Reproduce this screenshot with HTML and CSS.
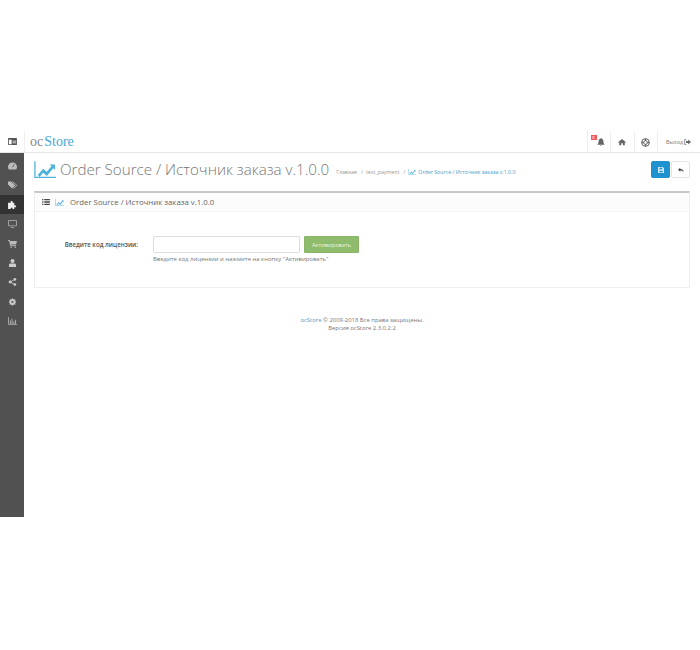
FILE: index.html
```html
<!DOCTYPE html>
<html lang="ru">
<head>
<meta charset="utf-8">
<title>Order Source</title>
<link rel="stylesheet" href="styles.css">
</head>
<body>
<svg class="defs" width="0" height="0" aria-hidden="true">
  <symbol id="chart" viewBox="0 0 24 19"><path d="M1 0v17.500h23" fill="none" stroke="currentColor" stroke-width="1.400"/><path d="M4 15l6-7 4 3.500 5-6-2-2h6v6l-2-2-7 8.500-4-3.500-4 4.500z" fill="currentColor"/></symbol>
</svg>
<div class="app">
  <header class="header">
    <div class="toggle">
      <svg class="ico-toggle" viewBox="0 0 10 8"><path d="M0 0h10v8H0zM1 2v5h3V2zm4 1v1h4V3zm0 2v1h4V5z" fill="#555" fill-rule="evenodd"/></svg>
    </div>
    <div class="logo"><span class="logo-oc">oc</span><span class="logo-store">Store</span></div>
    <nav class="topnav">
      <div class="topitem bell-item">
        <span class="badge">8</span>
        <svg class="ico" viewBox="0 0 10 10"><path d="M5 0c.5 0 .8.300.8.800C7.300 1.200 8 2.500 8 4c0 2 .5 3 1.300 3.800V8.500H.7v-.7C1.500 7 2 6 2 4c0-1.500.7-2.800 2.200-3.200C4.200.3 4.500 0 5 0zM4 9h2c0 .6-.4 1-1 1s-1-.4-1-1z" fill="#666"/></svg>
      </div>
      <div class="topitem">
        <svg class="ico" viewBox="0 0 10 10"><path d="M5 1.200L10 5.300l-.5.600L8.500 5v4H6V6.500H4V9H1.500V5l-1 .9L0 5.300z" fill="#666"/></svg>
      </div>
      <div class="topitem">
        <svg class="ico ico-ring" viewBox="0 0 10 10"><circle cx="5" cy="5" r="4.300" fill="none" stroke="#666" stroke-width="1.100"/><circle cx="5" cy="5" r="2" fill="none" stroke="#666" stroke-width="1"/><path d="M5 .8v2.400M5 6.800v2.400M.8 5h2.400M6.800 5h2.400" stroke="#666" stroke-width="1.600"/></svg>
      </div>
      <div class="topitem logout">
        <span>Выход</span>
        <svg class="ico-out" viewBox="0 0 10 8"><path d="M3.500.5H1v7h2.500" fill="none" stroke="#666"/><path d="M3 2.500h3V.5L10 4 6 7.500v-2H3z" fill="#666"/></svg>
      </div>
    </nav>
  </header>
  <aside class="sidebar">
    <div class="side-item"><svg class="side-ico" viewBox="0 0 10 8"><path d="M5 0c2.800 0 5 2.100 5 5 0 1-.3 2-.8 3H.8C.3 7 0 6 0 5c0-2.900 2.200-5 5-5z" fill="#bbb"/><path d="M5 5.500L7 2" stroke="#555" stroke-width=".9"/></svg></div>
    <div class="side-item"><svg class="side-ico" viewBox="0 0 10 8"><path d="M0 0h3.500l4.500 4.500L4.500 8 0 3.500z" fill="#bbb"/><path d="M5 0l4.800 4.500L6 8" fill="none" stroke="#bbb"/></svg></div>
    <div class="side-item active"><svg class="side-ico" viewBox="0 0 10 9"><path d="M3 0h2v2h2v3h2v2H7v2H5V7.500H3V9H0V2h3z" fill="#eee"/></svg></div>
    <div class="side-item"><svg class="side-ico" viewBox="0 0 10 9"><path d="M.5.500h9v6h-9zM3 8.500h4" fill="none" stroke="#aaa"/></svg></div>
    <div class="side-item"><svg class="side-ico" viewBox="0 0 10 9"><path d="M0 0h2l.3 1H10L9 5H3l.3 1H9v1H2.500L1.200 1H0z" fill="#bbb"/><circle cx="3.500" cy="8.200" r=".8" fill="#bbb"/><circle cx="8" cy="8.200" r=".8" fill="#bbb"/></svg></div>
    <div class="side-item"><svg class="side-ico" viewBox="0 0 10 9"><circle cx="5" cy="2.300" r="2.300" fill="#ccc"/><path d="M1 9V6.500C1 5.500 2 5 3 5h4c1 0 2 .5 2 1.500V9z" fill="#ccc"/></svg></div>
    <div class="side-item"><svg class="side-ico" viewBox="0 0 10 9"><path d="M7.500 1.500l-5 3 5 3" fill="none" stroke="#ccc"/><circle cx="2.300" cy="4.500" r="1.600" fill="#ccc"/><circle cx="7.700" cy="1.600" r="1.500" fill="#ccc"/><circle cx="7.700" cy="7.400" r="1.500" fill="#ccc"/></svg></div>
    <div class="side-item"><svg class="side-ico" viewBox="0 0 10 10"><circle cx="5" cy="5" r="2.800" fill="none" stroke="#ccc" stroke-width="2"/><path d="M5 .5v9M.5 5h9M1.800 1.800l6.400 6.400M8.200 1.800L1.800 8.200" stroke="#ccc" stroke-width="1.200"/><circle cx="5" cy="5" r="1.100" fill="#555"/></svg></div>
    <div class="side-item"><svg class="side-ico" viewBox="0 0 10 9"><path d="M.5 0v8.500H10" fill="none" stroke="#aaa"/><path d="M2 4h1v4H2zM4 2h1v6H4zM6 5h1v3H6zM8 3h1v5H8z" fill="#bbb"/></svg></div>
  </aside>
  <main class="content">
    <div class="page-head">
      <svg class="title-ico"><use href="#chart"/></svg>
      <h1 class="title">Order Source / Источник заказа v.1.0.0</h1>
      <ul class="crumbs">
        <li>Главная</li>
        <li class="sep">/</li>
        <li>text_payment</li>
        <li class="sep">/</li>
        <li class="crumb-link"><svg class="crumb-ico"><use href="#chart"/></svg>Order Source / Источник заказа v.1.0.0</li>
      </ul>
      <div class="actions">
        <button class="btn btn-blue" type="button"><svg class="btn-ico" viewBox="0 0 8 8"><path d="M0 0h6.500L8 1.500V8H0zM2 1v2h3.500V1zM2 5v2h4V5z" fill="#cfe6f5" fill-rule="evenodd"/></svg></button>
        <button class="btn btn-white" type="button"><svg class="btn-ico" viewBox="0 0 8 8"><path d="M3 1v1.600c3 0 4.500 1.400 4.500 4.400C6.800 5.300 5.500 4.700 3 4.700v1.600L0 3.600z" fill="#444"/></svg></button>
      </div>
    </div>
    <section class="panel">
      <div class="panel-head">
        <svg class="list-ico" viewBox="0 0 9 7"><path d="M0 0h1.500v1.500H0zM2.500 0H9v1.500H2.500zM0 2.750h1.500v1.500H0zM2.500 2.750H9v1.500H2.500zM0 5.500h1.500V7H0zM2.500 5.500H9V7H2.500z" fill="#444"/></svg>
        <svg class="panel-chart"><use href="#chart"/></svg>
        <h3 class="panel-title">Order Source / Источник заказа v.1.0.0</h3>
      </div>
      <form class="panel-body">
        <label class="form-label" for="lic">Введите код лицензии:</label>
        <div class="form-field">
          <div class="form-row">
            <input class="form-input" id="lic" type="text">
            <button class="btn-green" type="button">Активировать</button>
          </div>
          <p class="help">Введите код лицензии и нажмите на кнопку "Активировать"</p>
        </div>
      </form>
    </section>
    <footer class="footer">
      <div><a class="foot-link">ocStore</a> © 2009-2018 Все права защищены.</div>
      <div>Версия ocStore 2.3.0.2.2</div>
    </footer>
  </main>
</div>
</body>
</html>
```
FILE: styles.css
```css
* { box-sizing: border-box; }
html, body { margin: 0; padding: 0; background: #fff; }
body { font-family: "Open Sans", sans-serif; color: #666; padding-top: 131px; }
.defs { position: absolute; }
.app { display: grid; grid-template-columns: 24px 1fr; grid-template-rows: 22px 364px; width: 700px; }

.header { grid-column: 1 / 3; display: flex; align-items: center; border-bottom: 1px solid #e6e6e6; height: 22px; }
.toggle { width: 25px; height: 21px; display: flex; align-items: center; justify-content: center; border-right: 1px solid #eee; }
.ico-toggle { width: 9px; height: 7px; }
.logo { margin-left: 5px; font-family: "Liberation Serif", serif; font-size: 14px; line-height: 21px; display: flex; gap: 1px; }
.logo-oc { color: #888; }
.logo-store { color: #3fa9d6; }
.topnav { margin-left: auto; display: flex; height: 21px; }
.topitem { width: 23.500px; height: 21px; border-left: 1px solid #eee; display: flex; align-items: center; justify-content: center; position: relative; padding-top: 1px; }
.ico { width: 8px; height: 8px; }
.ico-ring { width: 9px; height: 9px; }
.bell-item .ico { margin-left: 4px; }
.badge { position: absolute; left: 3px; top: 4px; width: 6px; height: 5px; background: #f05a5f; color: #fff; font-size: 4px; line-height: 5px; text-align: center; }
.logout { width: 43px; gap: 1px; font-size: 5.500px; color: #777; justify-content: flex-start; padding-left: 8px; }
.ico-out { width: 7px; height: 6px; }

.sidebar { background: #515151; display: flex; flex-direction: column; padding-top: 3.300px; }
.side-item { height: 19.400px; display: flex; align-items: center; justify-content: center; }
.side-item.active { background: #333; }
.side-ico { width: 9px; height: 8px; }

.content { padding: 0 10px; min-width: 0; }
.page-head { display: flex; align-items: flex-start; height: 38px; padding-top: 8px; }
.title-ico { width: 22px; height: 18px; color: #4fb3dc; flex: none; }
.title { margin: 0 0 0 4px; font-size: 15.150px; font-weight: 300; color: #777; white-space: nowrap; line-height: 16px; }
.crumbs { list-style: none; display: flex; gap: 3px; align-items: center; margin: 7px 0 0 7px; padding: 0; font-size: 5.250px; line-height: 8px; color: #999; white-space: nowrap; }
.sep { margin-left: 1px; }
.crumb-link { color: #3d9dcf; display: flex; align-items: center; gap: 2px; }
.crumb-ico { width: 8px; height: 6px; color: #5bb5dd; }
.actions { margin-left: auto; display: flex; gap: 1px; }
.btn { width: 19px; height: 17px; border-radius: 2px; padding: 0; display: flex; align-items: center; justify-content: center; }
.btn-blue { background: #1e91cf; border: 1px solid #1e91cf; }
.btn-white { background: #fff; border: 1px solid #e4e4e4; }
.btn-ico { width: 6px; height: 6px; }

.panel { border: 1px solid #eee; border-top: 2px solid #c8c8c8; height: 97px; }
.panel-head { display: flex; align-items: center; height: 19px; background: #fcfcfc; border-bottom: 1px solid #f3f3f3; padding-left: 7px; }
.list-ico { width: 8px; height: 6px; }
.panel-chart { width: 9px; height: 7px; color: #5bb5dd; margin-left: 5px; }
.panel-title { margin: 0 0 0 6px; font-size: 7.800px; font-weight: 400; color: #666; white-space: nowrap; }
.panel-body { display: flex; align-items: flex-start; padding-top: 24px; }
.form-label { width: 103px; text-align: right; font-size: 6.200px; font-weight: 600; color: #555; line-height: 17px; white-space: nowrap; flex: none; }
.form-field { margin-left: 15px; }
.form-row { display: flex; gap: 4px; }
.form-input { width: 147px; height: 17px; border: 1px solid #ddd; border-radius: 2px; background: #fff; padding: 0; }
.btn-green { width: 55px; height: 17px; background: #8fbb6c; border: 1px solid #8ab566; border-radius: 1px; color: #eaf3e2; font-family: "Open Sans", sans-serif; font-size: 5.700px; padding: 0; }
.help { margin: 2px 0 0; font-size: 5.950px; color: #777; line-height: 8px; white-space: nowrap; }

.footer { margin-top: 28px; text-align: center; font-size: 5.900px; color: #777; line-height: 8px; }
.foot-link { color: #3d9dcf; }
```
